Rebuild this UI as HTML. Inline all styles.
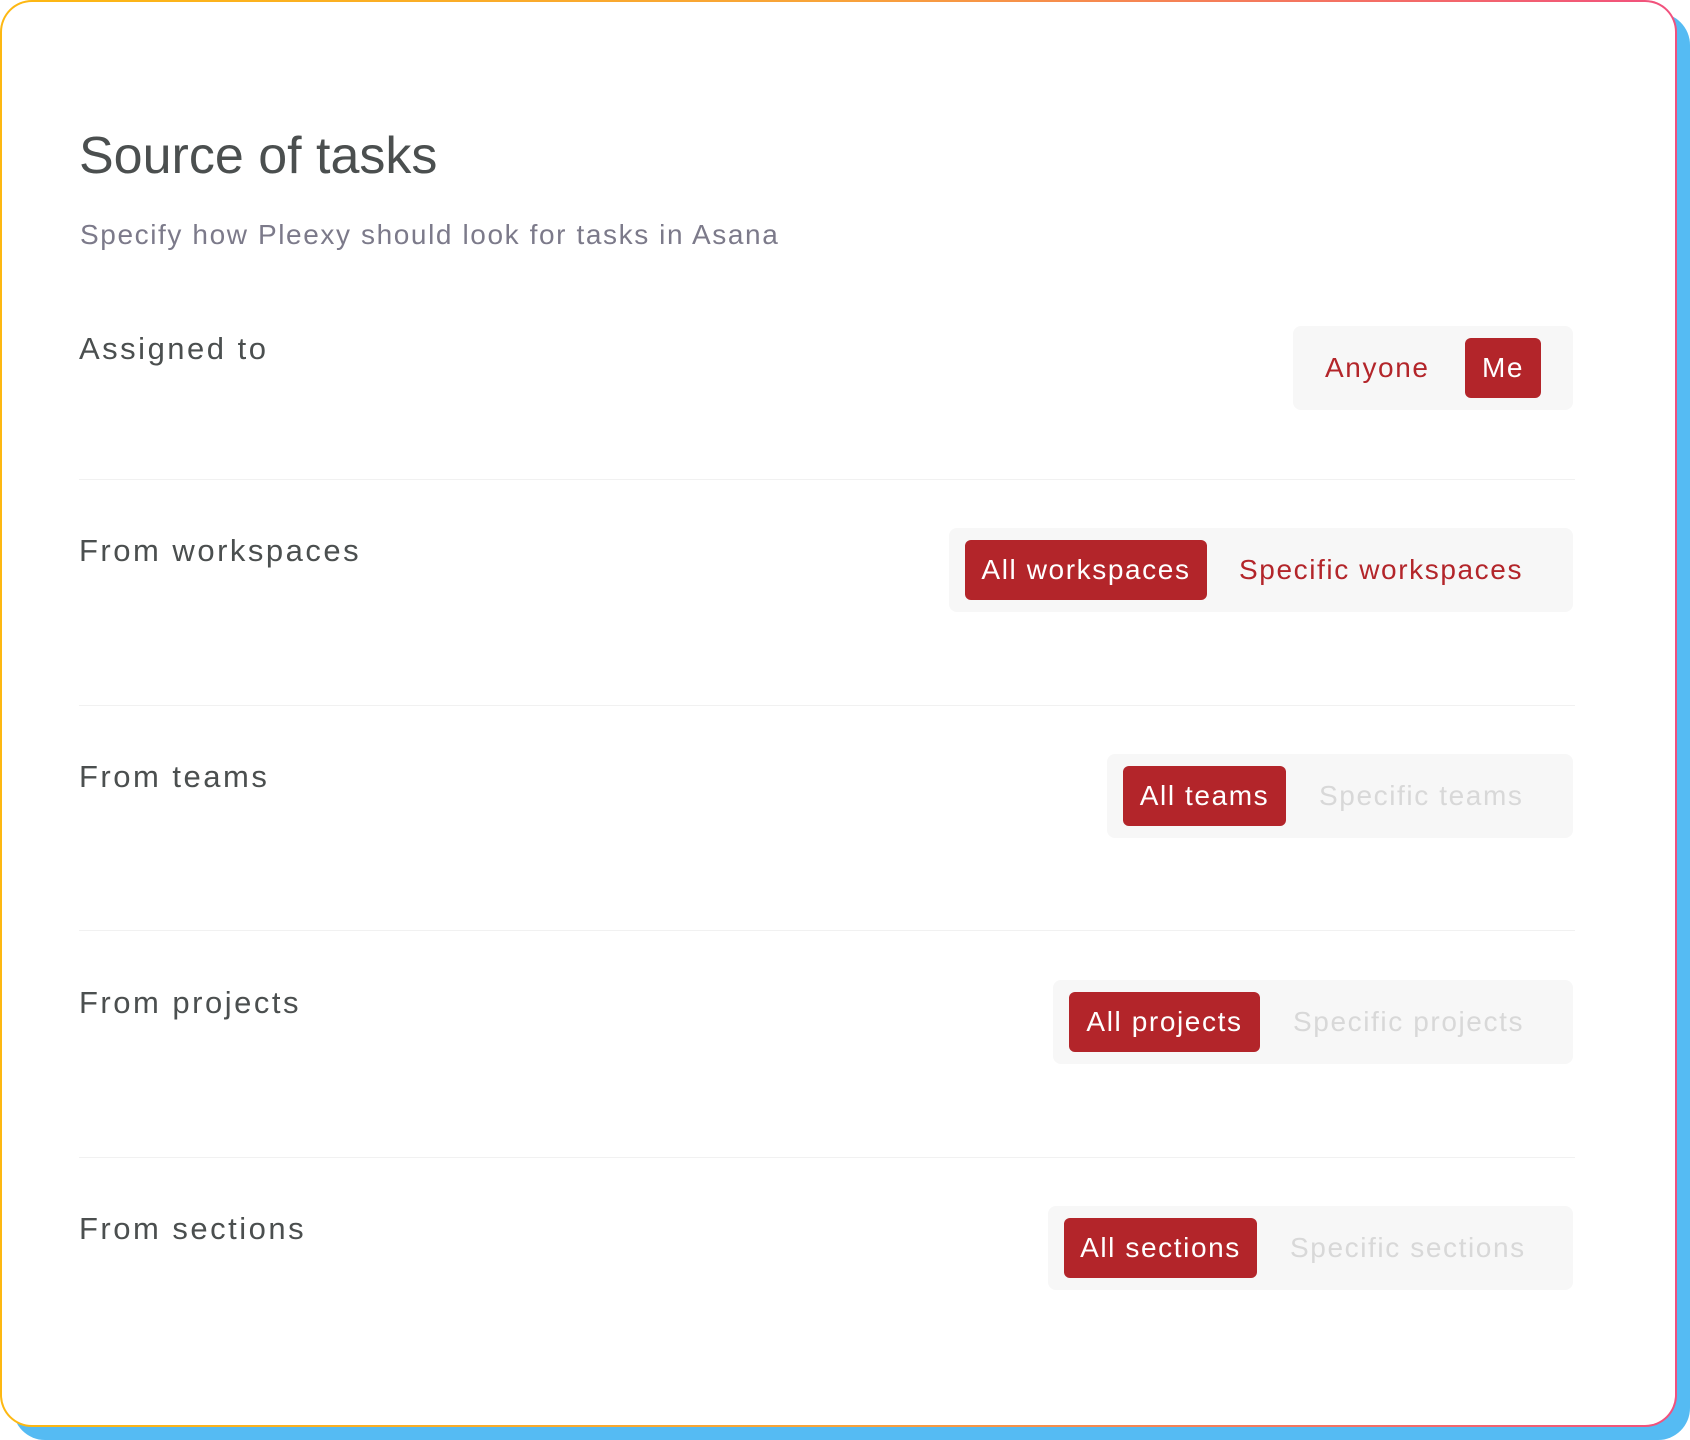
<!DOCTYPE html>
<html><head><meta charset="utf-8"><style>
*{margin:0;padding:0;box-sizing:border-box}
html,body{width:1690px;height:1440px;background:#fff;overflow:hidden;font-family:"Liberation Sans",sans-serif}
.shadow{position:absolute;left:13px;top:13px;width:1677px;height:1427px;background:#55bbf3;border-radius:32px}
.card{position:absolute;left:0;top:0;width:1677px;height:1427px;border-radius:32px;background:linear-gradient(90deg,#fdb812 0%,#f8a33a 50%,#f1507e 100%);padding:2px}
.inner{width:100%;height:100%;background:#fff;border-radius:30px;position:relative}
.t{position:absolute;white-space:nowrap}
.title{left:77px;top:124px;font-size:52px;color:#4b4f4f;letter-spacing:0px}
.sub{left:78px;top:217px;font-size:28px;color:#7c7a8a;letter-spacing:1.6px}
.lbl{left:77px;font-size:31px;color:#4b4f4f;letter-spacing:2.5px}
.hr{position:absolute;left:77px;width:1496px;height:1px;background:#f1f1f1}
.grp{position:absolute;height:84px;background:#f7f7f7;border-radius:8px}
.btn{position:absolute;top:12px;height:60px;background:#b3252a;color:#fff;border-radius:6px;font-size:28px;line-height:60px;text-align:center;letter-spacing:1.6px}
.off{position:absolute;top:12px;height:60px;line-height:60px;font-size:28px;color:#b3252a;letter-spacing:1.6px;white-space:nowrap}
.dis{color:#d8d8d8}
</style></head><body>
<div class="shadow"></div>
<div class="card"><div class="inner">
<div class="t title">Source of tasks</div>
<div class="t sub">Specify how Pleexy should look for tasks in Asana</div>

<div class="t lbl" style="top:329px">Assigned to</div>
<div class="grp" style="left:1291px;top:324px;width:280px">
 <div class="off" style="left:32px">Anyone</div>
 <div class="btn" style="left:172px;width:76px">Me</div>
</div>
<div class="hr" style="top:477px"></div>

<div class="t lbl" style="top:531px">From workspaces</div>
<div class="grp" style="left:947px;top:526px;width:624px">
 <div class="btn" style="left:16px;width:242px">All workspaces</div>
 <div class="off" style="left:290px">Specific workspaces</div>
</div>
<div class="hr" style="top:703px"></div>

<div class="t lbl" style="top:757px">From teams</div>
<div class="grp" style="left:1105px;top:752px;width:466px">
 <div class="btn" style="left:16px;width:163px">All teams</div>
 <div class="off dis" style="left:212px">Specific teams</div>
</div>
<div class="hr" style="top:928px"></div>

<div class="t lbl" style="top:983px">From projects</div>
<div class="grp" style="left:1051px;top:978px;width:520px">
 <div class="btn" style="left:16px;width:191px">All projects</div>
 <div class="off dis" style="left:240px">Specific projects</div>
</div>
<div class="hr" style="top:1155px"></div>

<div class="t lbl" style="top:1209px">From sections</div>
<div class="grp" style="left:1046px;top:1204px;width:525px">
 <div class="btn" style="left:16px;width:193px">All sections</div>
 <div class="off dis" style="left:242px">Specific sections</div>
</div>
</div></div>
</body></html>
